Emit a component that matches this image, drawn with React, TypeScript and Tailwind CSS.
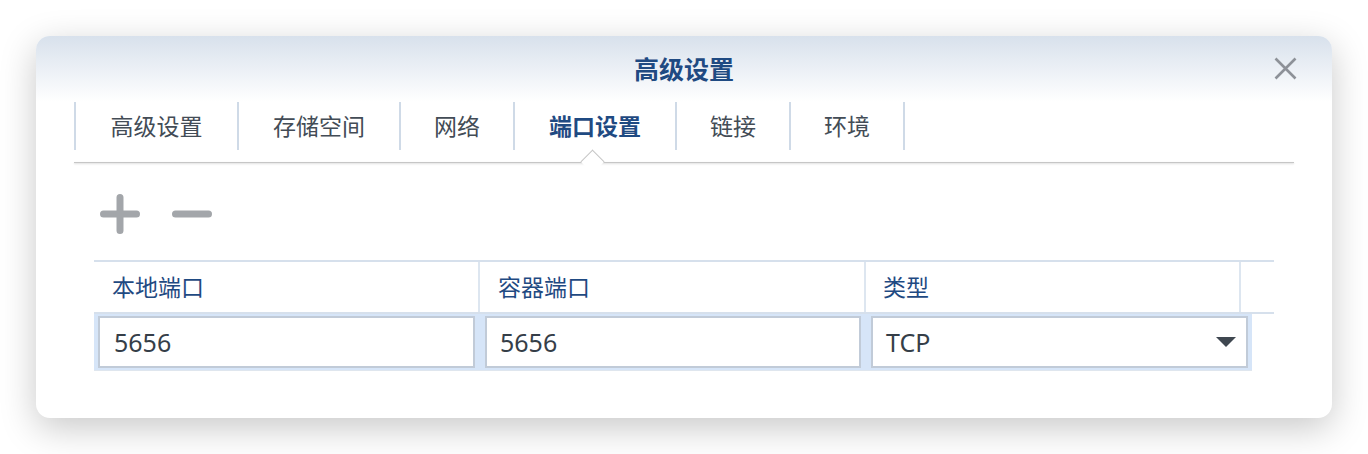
import { useState } from "react";

const tabs = [
  { label: "高级设置", w: "w-[163px]" },
  { label: "存储空间", w: "w-[162px]" },
  { label: "网络", w: "w-[114px]" },
  { label: "端口设置", w: "w-[162px]" },
  { label: "链接", w: "w-[114px]" },
  { label: "环境", w: "w-[114px]" },
];

function App() {
  const [active] = useState<string>("端口设置");

  return (
    <div className="w-[1368px] h-[454px] bg-white pt-[36px] pl-[36px] font-['Noto_Sans','Noto_Sans_CJK_SC',sans-serif]">
      <div className="relative w-[1296px] h-[382px] bg-white rounded-[14px] shadow-[0_10px_36px_rgba(0,0,0,0.22)] overflow-hidden">
        {/* header */}
        <div className="h-[66px] flex items-center justify-center bg-gradient-to-b from-[#d8e1ec] to-white">
          <span className="text-[25px] leading-none font-bold text-[#1f4a82]">高级设置</span>
        </div>
        <button className="absolute right-[35px] top-[21px] w-[23px] h-[23px]">
          <svg viewBox="0 0 23 23" className="w-[23px] h-[23px]">
            <path d="M1.5 1.5 L21.5 21.5 M21.5 1.5 L1.5 21.5" stroke="#8d9198" strokeWidth="2.6" />
          </svg>
        </button>

        {/* tabs */}
        <div className="relative ml-[38px] w-[1220px]">
          <div className="flex h-[48px]">
            <div className="w-[2px] h-full bg-[#cfdae7]" />
            {tabs.map((t) => (
              <div
                key={t.label}
                className={`${t.w} h-full flex items-center justify-center border-r-2 border-[#cfdae7] text-[23px] leading-none ${
                  t.label === active ? "font-bold text-[#1f4a82]" : "text-[#434c56]"
                }`}
              >
                {t.label}
              </div>
            ))}
          </div>
          <div className="h-[12px]" />
          <div className="h-px bg-[#c6c6c6] shadow-[0_1px_2px_rgba(0,0,0,0.18)]" />
          <div className="absolute left-[510px] top-[51px] w-[17px] h-[17px] rotate-45 bg-white border-l border-t border-[#c6c6c6]" />
        </div>

        {/* toolbar */}
        <div className="flex items-center gap-[32px] ml-[64px] mt-[31px] h-[40px]">
          <svg viewBox="0 0 40 40" className="w-[40px] h-[40px]">
            <path d="M3.5 20 H36.5 M20 3.5 V36.5" stroke="#a3a6aa" strokeWidth="7" strokeLinecap="round" />
          </svg>
          <svg viewBox="0 0 40 40" className="w-[40px] h-[40px]">
            <path d="M3.5 20 H36.5" stroke="#a3a6aa" strokeWidth="7" strokeLinecap="round" />
          </svg>
        </div>

        {/* table */}
        <div className="ml-[58px] mt-[26px] w-[1180px]">
          <div className="flex h-[54px] border-t-2 border-b-2 border-[#d6e0ec] text-[23px] leading-none text-[#1f4a82]">
            <div className="w-[386px] flex items-center pl-[18px] border-r-2 border-[#dde6f0]">本地端口</div>
            <div className="w-[386px] flex items-center pl-[18px] border-r-2 border-[#dde6f0]">容器端口</div>
            <div className="w-[375px] flex items-center pl-[17px] border-r-2 border-[#dde6f0]">类型</div>
            <div className="flex-1" />
          </div>
          <div className="flex w-[1158px] h-[57px] bg-[#d6e5f8] border-b border-[#dfe6ee] py-[2px] text-[25px] leading-none text-[#353e48]">
            <div className="w-[386px] pl-[4px] pr-[5px]">
              <div className="h-full bg-white border-2 border-[#c1cbd8] flex items-center pl-[14px]">5656</div>
            </div>
            <div className="w-[386px] pl-[5px] pr-[5px]">
              <div className="h-full bg-white border-2 border-[#c1cbd8] flex items-center pl-[13px]">5656</div>
            </div>
            <div className="w-[386px] pl-[5px] pr-[4px]">
              <div className="h-full bg-white border-2 border-[#c1cbd8] flex items-center justify-between pl-[13px] pr-[10px]">
                <span>TCP</span>
                <svg viewBox="0 0 20 10" className="w-[20px] h-[10px]">
                  <path d="M0 0 H20 L10 10 Z" fill="#3f4750" />
                </svg>
              </div>
            </div>
          </div>
        </div>
      </div>
    </div>
  );
}

export default App;
